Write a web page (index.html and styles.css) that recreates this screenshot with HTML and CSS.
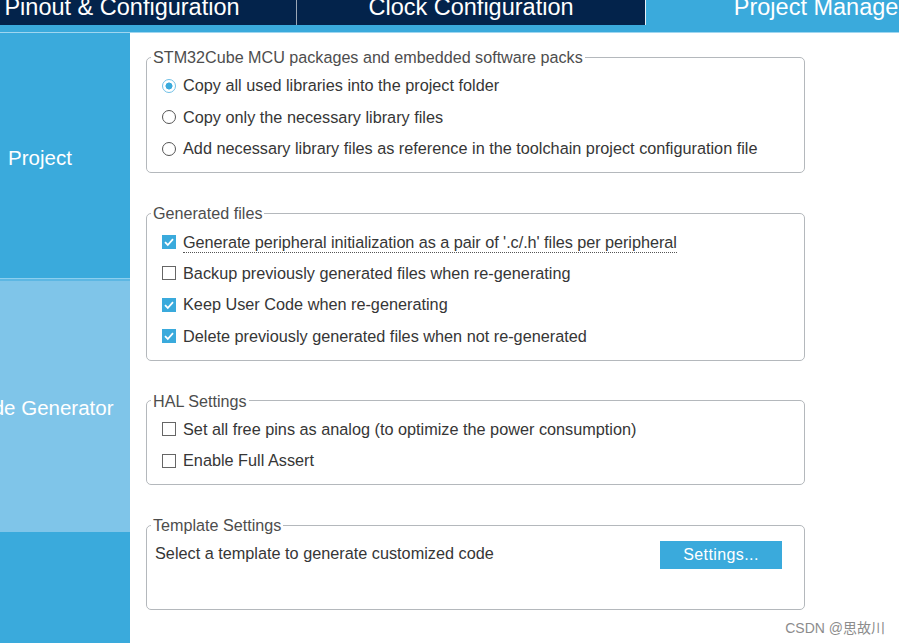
FILE: index.html
```html
<!DOCTYPE html>
<html>
<head>
<meta charset="utf-8">
<title>Project Manager</title>
<link rel="stylesheet" href="styles.css">
</head>
<body>
<div class="app">
  <div class="tabbar">
    <div class="tab">Pinout &amp; Configuration</div>
    <div class="tab tab-mid">Clock Configuration</div>
    <div class="tab active">Project Manager</div>
  </div>
  <div class="strip"></div>
  <div class="main">
    <nav class="sidebar">
      <div class="nav-item nav-project"><span>Project</span></div>
      <div class="nav-item nav-code"><span>Code Generator</span></div>
      <div class="nav-item nav-adv"></div>
    </nav>
    <section class="content">
      <fieldset class="group">
        <legend>STM32Cube MCU packages and embedded software packs</legend>
        <div class="row"><span class="radio checked"></span><span>Copy all used libraries into the project folder</span></div>
        <div class="row"><span class="radio"></span><span>Copy only the necessary library files</span></div>
        <div class="row"><span class="radio"></span><span>Add necessary library files as reference in the toolchain project configuration file</span></div>
      </fieldset>
      <fieldset class="group">
        <legend>Generated files</legend>
        <div class="row"><span class="check checked"><svg viewBox="0 0 14 14" width="14" height="14"><polyline points="3,7.2 5.8,10 11,4.2" fill="none" stroke="#fff" stroke-width="1.8"/></svg></span><span class="dotted">Generate peripheral initialization as a pair of '.c/.h' files per peripheral</span></div>
        <div class="row"><span class="check"></span><span>Backup previously generated files when re-generating</span></div>
        <div class="row"><span class="check checked"><svg viewBox="0 0 14 14" width="14" height="14"><polyline points="3,7.2 5.8,10 11,4.2" fill="none" stroke="#fff" stroke-width="1.8"/></svg></span><span>Keep User Code when re-generating</span></div>
        <div class="row"><span class="check checked"><svg viewBox="0 0 14 14" width="14" height="14"><polyline points="3,7.2 5.8,10 11,4.2" fill="none" stroke="#fff" stroke-width="1.8"/></svg></span><span>Delete previously generated files when not re-generated</span></div>
      </fieldset>
      <fieldset class="group">
        <legend>HAL Settings</legend>
        <div class="row"><span class="check"></span><span>Set all free pins as analog (to optimize the power consumption)</span></div>
        <div class="row"><span class="check"></span><span>Enable Full Assert</span></div>
      </fieldset>
      <fieldset class="group group-template">
        <legend>Template Settings</legend>
        <div class="row row-template"><span>Select a template to generate customized code</span><button class="btn">Settings...</button></div>
      </fieldset>
    </section>
  </div>
  <div class="watermark">CSDN @思故川</div>
</div>
</body>
</html>
```
FILE: styles.css
```css
html, body {
  margin: 0;
  padding: 0;
  background: #ffffff;
}
.app {
  position: relative;
  width: 899px;
  height: 643px;
  overflow: hidden;
  font-family: "Liberation Sans", Arial, sans-serif;
}
.tabbar {
  display: flex;
  height: 25px;
  background: #03234b;
  margin-left: -52px;
  width: 1200px;
}
.tab {
  flex: none;
  width: 348px;
  height: 25px;
  color: #ffffff;
  font-size: 23.5px;
  line-height: 15px;
  text-align: center;
  border-right: 1px solid #9aa6b5;
  white-space: nowrap;
}
.tab-mid {
  border-right-color: #e6eef5;
}
.tab.active {
  background: #3aaadc;
  border-right: none;
}
.strip {
  height: 7px;
  background: #3aaadc;
  border-bottom: 1px solid #9fd6f0;
}
.main {
  display: flex;
  height: 610px;
}
.sidebar {
  flex: none;
  width: 130px;
  display: flex;
  flex-direction: column;
  overflow: hidden;
}
.nav-item {
  box-sizing: border-box;
  display: flex;
  align-items: center;
  justify-content: center;
  padding-right: 50px;
  color: #ffffff;
  font-size: 20.5px;
  white-space: nowrap;
}
.nav-item span {
  flex: none;
}
.nav-project {
  height: 246px;
  background: #3aaadc;
  border-bottom: 1px solid #8ccfee;
  padding-top: 5px;
}
.nav-code {
  height: 253px;
  background: #7fc5e9;
  border-top: 2px solid #5cb7e3;
  padding-top: 3px;
}
.nav-adv {
  flex: 1;
  background: #3aaadc;
}
.content {
  flex: 1;
  padding: 15px 0 0 16px;
}
.group {
  box-sizing: border-box;
  width: 659px;
  margin: 0 0 31px 0;
  padding: 4px 0 7.5px 0;
  border: 1px solid #b4b8bc;
  border-radius: 5px;
  min-width: 0;
}
.group legend {
  margin-left: 4px;
  padding: 0 2px;
  font-size: 16.15px;
  line-height: 18px;
  color: #4d4d4d;
}
.row {
  display: flex;
  align-items: center;
  height: 31.5px;
  padding-left: 15px;
  font-size: 16.25px;
  color: #363636;
  white-space: nowrap;
}
.radio {
  flex: none;
  box-sizing: border-box;
  width: 14px;
  height: 14px;
  margin-right: 7px;
  border: 1px solid #555555;
  border-radius: 50%;
  background: #ffffff;
}
.radio.checked {
  border: 1.5px solid #6fc0e6;
  background: radial-gradient(circle, #3aaadc 0, #3aaadc 3.2px, #ffffff 3.8px);
}
.check {
  flex: none;
  box-sizing: border-box;
  width: 14px;
  height: 14px;
  margin-right: 7px;
  border: 1px solid #666666;
  background: #ffffff;
  display: flex;
}
.check.checked {
  border: none;
  background: #3aaadc;
}
.dotted {
  border-bottom: 1px dotted #555555;
  padding-top: 3px;
  letter-spacing: -0.05px;
}
.group-template {
  padding-bottom: 39px;
}
.row-template {
  padding-left: 8px;
  padding-right: 22px;
  justify-content: space-between;
}
.btn {
  width: 122px;
  height: 28px;
  border: none;
  background: #3aaadc;
  color: #ffffff;
  font-family: "Liberation Sans", Arial, sans-serif;
  font-size: 16px;
  letter-spacing: 0.4px;
  padding: 0;
  margin-top: 2px;
}
.watermark {
  position: absolute;
  right: 14px;
  top: 617px;
  font-family: "Liberation Sans", "Noto Sans CJK SC", sans-serif;
  font-size: 14px;
  color: #8c8c8c;
}
```
